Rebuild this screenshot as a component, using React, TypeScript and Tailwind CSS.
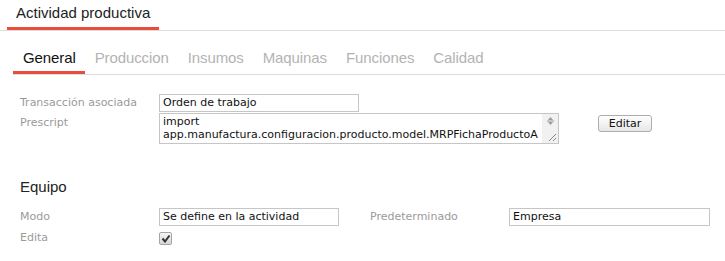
import React from 'react'

const tabs = ['General', 'Produccion', 'Insumos', 'Maquinas', 'Funciones', 'Calidad']

function Field({ value, width }: { value: string; width: string }) {
  return (
    <div
      className={`${width} h-[18px] border border-[#c6c6c6] bg-white px-[3px] text-[11px] leading-[16px] text-[#111] whitespace-nowrap overflow-hidden`}
    >
      {value}
    </div>
  )
}

function Label({ children, className = '' }: { children: React.ReactNode; className?: string }) {
  return <div className={`text-[11px] leading-[14px] text-[#9a9a9a] ${className}`}>{children}</div>
}

export default function App() {
  return (
    <div className="w-[725px] h-[261px] bg-white overflow-hidden font-['Liberation_Sans',Arial,sans-serif]">
      {/* Page title */}
      <div className="flex border-b border-[#dcdcdc]">
        <div className="ml-[7px] px-[9px] pt-[4px] pb-[6px] text-[15px] leading-[17px] text-[#222] border-b-[3px] border-[#e84c3d]">
          Actividad productiva
        </div>
      </div>

      {/* Tabs */}
      <div className="mt-[18px] ml-[13px] flex border-b border-[#dcdcdc]">
        {tabs.map((t, i) => (
          <div
            key={t}
            className={`pl-[10px] pr-[9px] pb-[5px] text-[15px] leading-[17px] tracking-[-0.1px] ${
              i === 0 ? 'text-[#111] border-b-[3px] border-[#e84c3d]' : 'text-[#b3b3b3] border-b-[3px] border-transparent'
            }`}
          >
            {t}
          </div>
        ))}
      </div>

      <div className="pl-[20px] font-['DejaVu_Sans',Verdana,sans-serif]">
        {/* General fields */}
        <div className="mt-[19px] flex items-center">
          <Label className="w-[139px]">Transacción asociada</Label>
          <Field value="Orden de trabajo" width="w-[200px]" />
        </div>
        <div className="mt-[1px] flex items-start">
          <Label className="w-[139px] pt-[3px]">Prescript</Label>
          <div className="w-[400px] h-[31px] border border-[#c6c6c6] bg-white flex overflow-hidden">
            <div className="flex-1 pl-[3px] pt-[1px] text-[11px] leading-[13px] text-[#111] whitespace-nowrap overflow-hidden">
              <div>import</div>
              <div>app.manufactura.configuracion.producto.model.MRPFichaProductoA</div>
            </div>
            <div className="w-[16px] bg-[#f1f1f1] flex flex-col items-center justify-between">
              <svg width="9" height="10" viewBox="0 0 9 10" className="mt-[2px]">
                <path d="M4.5 1 L7 4 H2 Z" fill="#9a9a9a" />
                <path d="M1 5 H8" stroke="#9a9a9a" strokeWidth="1" />
                <path d="M4.5 9 L7 6 H2 Z" fill="#9a9a9a" />
              </svg>
              <svg width="10" height="10" viewBox="0 0 10 10" className="self-end mr-[1px] mb-[1px]">
                <path d="M9 2 L2 9 M9 6 L6 9" stroke="#8a8a8a" strokeWidth="1" />
              </svg>
            </div>
          </div>
          <button className="ml-[39px] mt-[2px] h-[17px] w-[54px] rounded-[3px] border border-[#adadad] bg-gradient-to-b from-[#ffffff] to-[#e6e6e6] text-[11px] leading-[14px] text-[#111]">
            Editar
          </button>
        </div>

        {/* Equipo */}
        <div className="mt-[34px] text-[15px] leading-[17px] text-[#222] font-['Liberation_Sans',Arial,sans-serif]">
          Equipo
        </div>
        <div className="mt-[13px] flex items-center">
          <Label className="w-[139px]">Modo</Label>
          <Field value="Se define en la actividad" width="w-[180px]" />
          <Label className="ml-[31px] w-[139px]">Predeterminado</Label>
          <Field value="Empresa" width="w-[201px]" />
        </div>
        <div className="mt-[5px] flex items-center">
          <Label className="w-[139px]">Edita</Label>
          <div className="w-[13px] h-[13px] rounded-[2px] border border-[#a5a5a5] bg-gradient-to-b from-[#f4f4f4] to-[#d8d8d8] flex items-center justify-center">
            <svg width="10" height="9" viewBox="0 0 10 9">
              <path d="M1.5 4.5 L4 7.5 L8.5 1.5" stroke="#333" strokeWidth="2" fill="none" />
            </svg>
          </div>
        </div>
      </div>
    </div>
  )
}
